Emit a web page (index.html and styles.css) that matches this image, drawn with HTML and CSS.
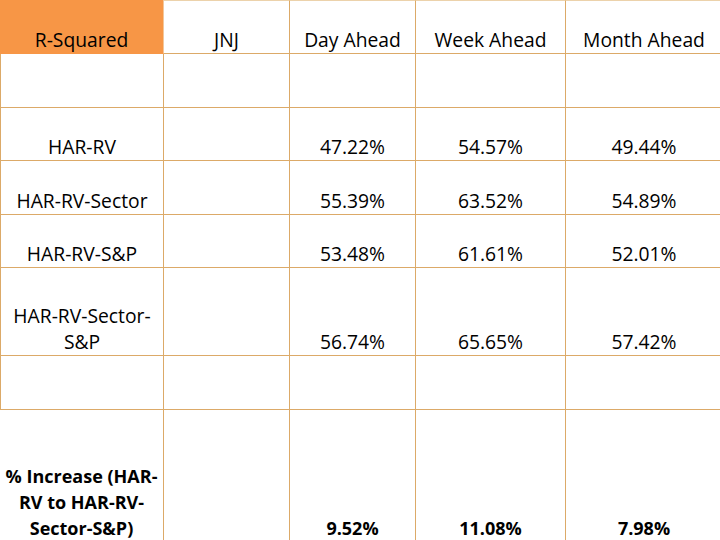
FILE: index.html
```html
<!DOCTYPE html>
<html>
<head>
<meta charset="utf-8">
<link rel="stylesheet" href="styles.css">
</head>
<body>
<div class="grid">
  <div class="cell head orange">R-Squared</div>
  <div class="cell head">JNJ</div>
  <div class="cell head">Day Ahead</div>
  <div class="cell head">Week Ahead</div>
  <div class="cell head last">Month Ahead</div>

  <div class="cell first"></div>
  <div class="cell"></div>
  <div class="cell"></div>
  <div class="cell"></div>
  <div class="cell last"></div>

  <div class="cell first">HAR-RV</div>
  <div class="cell"></div>
  <div class="cell">47.22%</div>
  <div class="cell">54.57%</div>
  <div class="cell last">49.44%</div>

  <div class="cell first">HAR-RV-Sector</div>
  <div class="cell"></div>
  <div class="cell">55.39%</div>
  <div class="cell">63.52%</div>
  <div class="cell last">54.89%</div>

  <div class="cell first">HAR-RV-S&amp;P</div>
  <div class="cell"></div>
  <div class="cell">53.48%</div>
  <div class="cell">61.61%</div>
  <div class="cell last">52.01%</div>

  <div class="cell first">HAR-RV-Sector-S&amp;P</div>
  <div class="cell"></div>
  <div class="cell">56.74%</div>
  <div class="cell">65.65%</div>
  <div class="cell last">57.42%</div>

  <div class="cell first"></div>
  <div class="cell"></div>
  <div class="cell"></div>
  <div class="cell"></div>
  <div class="cell last"></div>

  <div class="cell bold">% Increase (HAR-RV to HAR-RV-Sector-S&amp;P)</div>
  <div class="cell"></div>
  <div class="cell bold">9.52%</div>
  <div class="cell bold">11.08%</div>
  <div class="cell bold last">7.98%</div>
</div>
</body>
</html>
```

FILE: styles.css
```css
html, body {
  margin: 0;
  padding: 0;
  overflow: hidden;
  background: #ffffff;
}

.grid {
  display: grid;
  grid-template-columns: 164px 126px 126px 150px 156px;
  grid-template-rows: 54px 54px 53px 54px 53px 88px 54px 131px;
  width: 722px;
  font-family: "Open Sans", "Liberation Sans", sans-serif;
  font-size: 19.3px;
  line-height: 26px;
  color: #000000;
}

.cell {
  box-sizing: border-box;
  display: flex;
  align-items: flex-end;
  justify-content: center;
  text-align: center;
  border-right: 1px solid #dcaa68;
  border-bottom: 1px solid #dcaa68;
  padding: 0 1px;
}

.cell.last {
  border-right: none;
}

.cell.first {
  border-left: 1px solid #dcaa68;
}

.head {
  border-top: 1px solid #ecd2ab;
}

.orange {
  background: #f79646;
  border-top: none;
  border-right-color: #f3c79a;
  border-bottom-color: #f79646;
}

.bold {
  font-size: 18px;
  font-weight: 700;
  border-bottom: none;
}
```
